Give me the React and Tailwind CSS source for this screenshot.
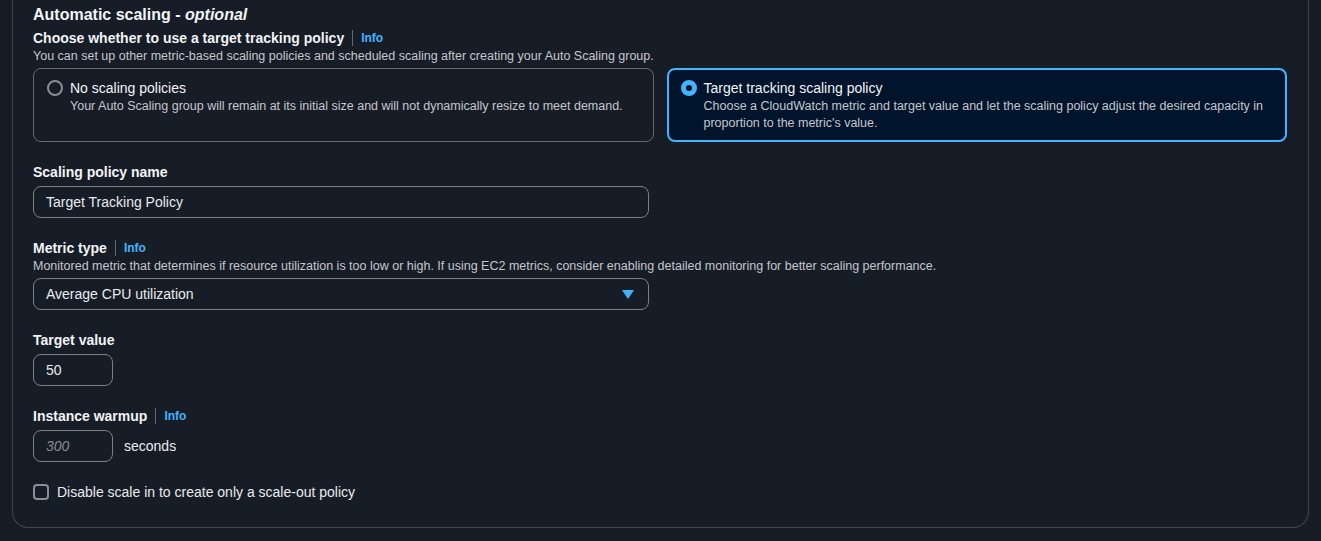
import React from "react";

const FONT = "font-['Liberation_Sans',Arial,sans-serif]";

function InfoLabel({ label }) {
  return (
    <div className="flex items-center h-5">
      <span className="text-[14px] font-bold text-[#f3f3f7] leading-5">{label}</span>
      <span className="mx-[8px] h-[16px] w-px bg-[#5f6b7a]" />
      <span className="text-[12px] font-bold text-[#42b4ff] leading-5">Info</span>
    </div>
  );
}

function Radio({ checked }) {
  return checked ? (
    <span className="mt-[2px] shrink-0 w-4 h-4 rounded-full border-[5px] border-[#42b4ff] bg-[#0f141a]" />
  ) : (
    <span className="mt-[2px] shrink-0 w-4 h-4 rounded-full border-2 border-[#8c8c94]" />
  );
}

function Tile({ checked, title, description }) {
  return (
    <div
      className={
        checked
          ? "flex gap-[7px] rounded-lg border-2 border-[#42b4ff] bg-[#00142b] pl-[12px] pr-4 pt-[8px] h-[74px]"
          : "flex gap-[7px] rounded-lg border border-[#656871] pl-[13px] pr-4 pt-[9px] h-[74px]"
      }
    >
      <Radio checked={checked} />
      <div>
        <div className="text-[14px] leading-5 text-[#f3f3f7]">{title}</div>
        <div className="text-[12.5px] leading-[17px] text-[#c6c6cd]">{description}</div>
      </div>
    </div>
  );
}

const fieldBox =
  "h-8 rounded-lg border border-[#7d8089] bg-[#161d26] px-3 flex items-center text-[14px]";

export default function App() {
  return (
    <div className={`min-h-[541px] bg-[#161d26] px-3 pb-3 ${FONT}`}>
      <div className="border-x border-b border-[#424650] rounded-b-2xl px-5 pt-1 pb-[25px]">
        <h2 className="text-[16px] leading-[22px] font-bold text-[#f3f3f7]">
          Automatic scaling - <i>optional</i>
        </h2>

        <div className="mt-[2px]">
          <InfoLabel label="Choose whether to use a target tracking policy" />
        </div>
        <p className="text-[12.5px] leading-4 text-[#c6c6cd]">
          You can set up other metric-based scaling policies and scheduled scaling after creating your Auto Scaling group.
        </p>

        <div className="mt-1 grid grid-cols-2 gap-[13px] pr-[1px]">
          <Tile
            title="No scaling policies"
            description="Your Auto Scaling group will remain at its initial size and will not dynamically resize to meet demand."
          />
          <Tile
            checked
            title="Target tracking scaling policy"
            description="Choose a CloudWatch metric and target value and let the scaling policy adjust the desired capacity in proportion to the metric's value."
          />
        </div>

        <div className="mt-5 text-[14px] leading-5 font-bold text-[#f3f3f7]">Scaling policy name</div>
        <div className={`mt-1 w-[616px] ${fieldBox} text-[#e9ebed]`}>Target Tracking Policy</div>

        <div className="mt-5">
          <InfoLabel label="Metric type" />
        </div>
        <p className="text-[12.5px] leading-4 text-[#c6c6cd]">
          Monitored metric that determines if resource utilization is too low or high. If using EC2 metrics, consider enabling detailed monitoring for better scaling performance.
        </p>
        <div className={`mt-1 w-[616px] ${fieldBox} justify-between text-[#e9ebed]`}>
          <span>Average CPU utilization</span>
          <svg width="12" height="9" viewBox="0 0 12 9" className="mr-[2px]">
            <path d="M0 0 H12 L6 9 Z" fill="#42b4ff" />
          </svg>
        </div>

        <div className="mt-5 text-[14px] leading-5 font-bold text-[#f3f3f7]">Target value</div>
        <div className={`mt-1 w-20 ${fieldBox} text-[#e9ebed]`}>50</div>

        <div className="mt-5">
          <InfoLabel label="Instance warmup" />
        </div>
        <div className="mt-1 flex items-center gap-[11px]">
          <div className={`w-20 ${fieldBox} italic text-[#8c8c94]`}>300</div>
          <span className="text-[14px] text-[#e9ebed]">seconds</span>
        </div>

        <label className="mt-5 flex items-center gap-2 h-5">
          <span className="w-4 h-4 rounded-[4px] border-2 border-[#8c8c94]" />
          <span className="text-[14px] text-[#e9ebed]">Disable scale in to create only a scale-out policy</span>
        </label>
      </div>
    </div>
  );
}
